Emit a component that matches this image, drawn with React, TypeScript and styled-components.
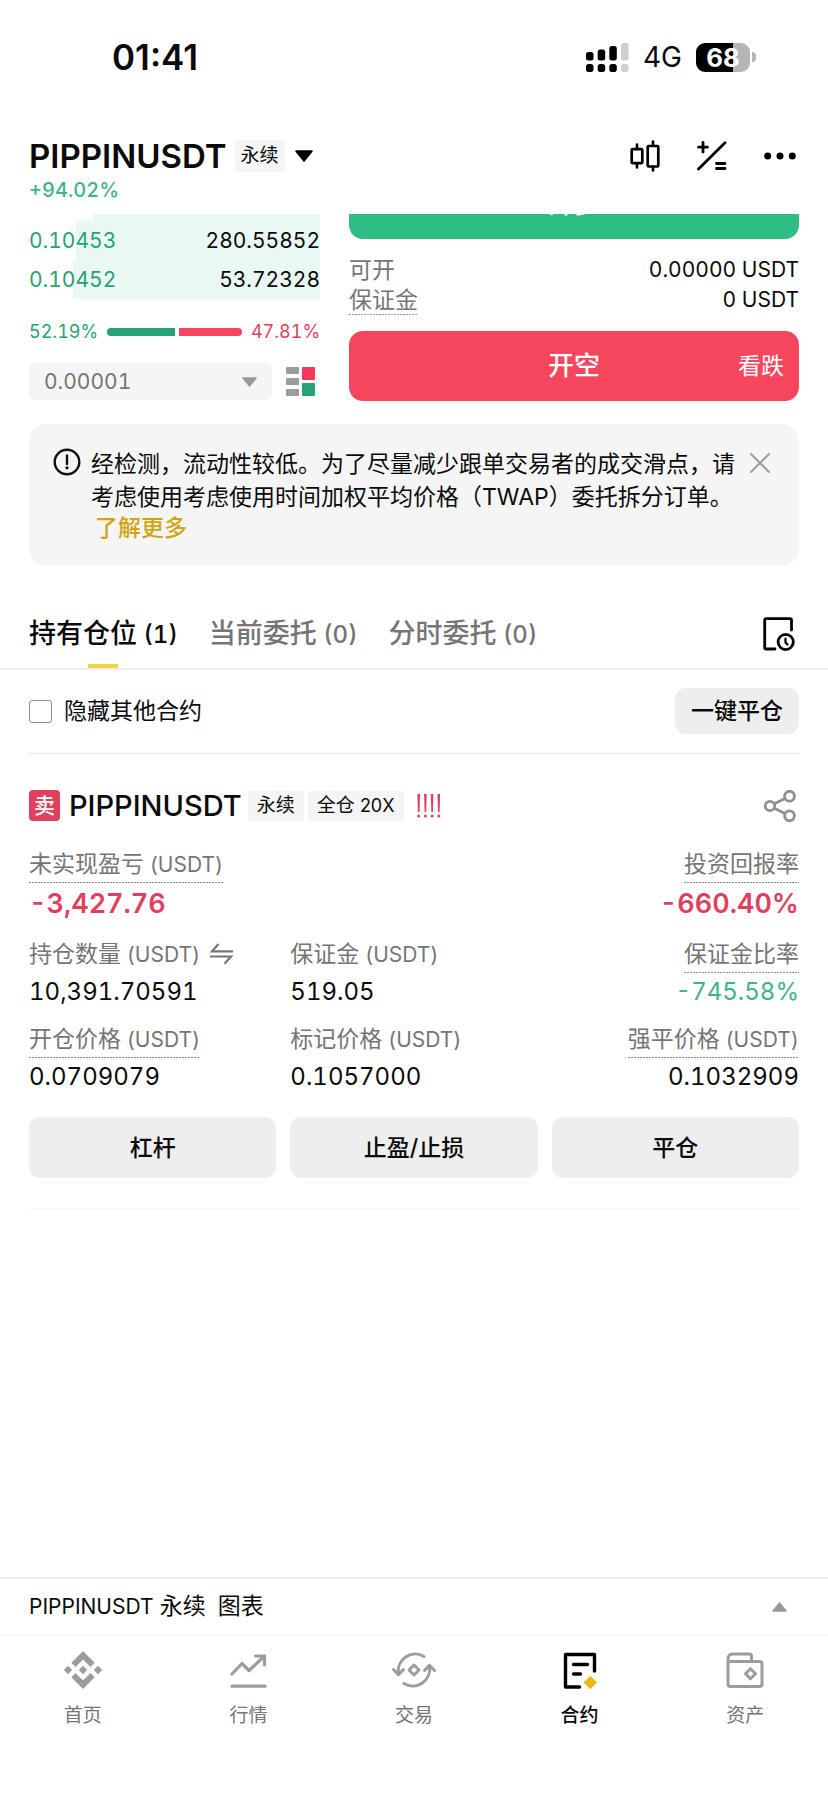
import React, { useState } from "react";
import styled, { createGlobalStyle } from "styled-components";

const c = {
  ink: "#0b0b0b",
  muted: "#757575",
  icon: "#9c9c9c",
  green: "#25a374",
  mint: "#3fb488",
  buy: "#2dbd85",
  sell: "#f6465d",
  loss: "#e0405e",
  tag: "#f5f5f5",
  fill: "#eeeeee",
  line: "#eeeeee",
  gold: "#d2a312",
};

const GlobalStyle = createGlobalStyle`
  *, *::before, *::after { box-sizing: border-box; }
  body { margin: 0; background: #fff; }
  body, button, select, input {
    font-family: Inter, "Noto Sans CJK SC", sans-serif;
    font-variant-numeric: tabular-nums;
    color: ${c.ink};
  }
  button { border: 0; padding: 0; background: none; cursor: pointer; }
  svg { display: block; flex: none; }
`;

const Page = styled.div`
  min-height: 100vh;
  display: flex;
  flex-direction: column;
`;

/* Status bar */
const StatusBar = styled.div`
  display: flex;
  align-items: center;
  justify-content: space-between;
  height: 114px;
  padding: 0 72px 0 112px;
`;
const Clock = styled.time`
  font-size: 35px;
  line-height: 40px;
  font-weight: 600;
  font-variant-numeric: normal;
`;
const StatusRight = styled.div`
  display: flex;
  align-items: center;
  gap: 14px;
`;
const Network = styled.span`
  font-size: 28px;
  line-height: 40px;
`;
const BatteryWrap = styled.div`
  display: flex;
  align-items: center;
  gap: 2px;
`;
const BatteryBody = styled.div<{ $level: number }>`
  width: 54px;
  height: 29px;
  border-radius: 9px;
  background: linear-gradient(to right, #000 ${(p) => p.$level}%, #b5b5b5 ${(p) => p.$level}%);
  color: #fff;
  font-size: 26px;
  line-height: 29px;
  font-weight: 700;
  text-align: center;
`;
const BatteryNub = styled.div`
  width: 4px;
  height: 10px;
  border-radius: 0 4px 4px 0;
  background: #b5b5b5;
`;

/* Pair header */
const PairHeader = styled.header`
  display: flex;
  justify-content: space-between;
  align-items: flex-start;
  height: 100px;
  padding: 22px 32px 0 29px;
`;
const PairRow = styled.div`
  display: flex;
  align-items: center;
  height: 40px;
`;
const PairName = styled.h1`
  margin: 0 8px 0 0;
  font-size: 33px;
  line-height: 40px;
  font-weight: 600;
`;
const PairTag = styled.span`
  padding: 0 6px;
  margin-right: 10px;
  border-radius: 3px;
  background: ${c.tag};
  font-size: 19px;
  line-height: 32px;
`;
const Change = styled.div`
  font-size: 20px;
  line-height: 28px;
  font-weight: 500;
  color: ${c.mint};
`;
const HeaderActions = styled.div`
  display: flex;
  align-items: center;
  gap: 37px;
  height: 40px;
`;
const IconButton = styled.button`
  display: flex;
  align-items: center;
  justify-content: center;
`;

/* Order area */
const Trade = styled.section`
  display: grid;
  grid-template-columns: 11fr 17fr;
  column-gap: 29px;
  padding: 0 29px;
`;
const Book = styled.div`
  display: flex;
  flex-direction: column;
`;
const BookRow = styled.div<{ $depth: number; $partial?: boolean }>`
  display: flex;
  justify-content: space-between;
  height: ${(p) => (p.$partial ? 7 : 39)}px;
  font-size: 21px;
  line-height: 39px;
  background: linear-gradient(to left, #e9f8f2 ${(p) => p.$depth}%, transparent ${(p) => p.$depth}%);
`;
const Price = styled.span`
  color: ${c.green};
`;
const Ratio = styled.div`
  display: flex;
  align-items: center;
  gap: 9px;
  margin: 18px 0 15px;
  font-size: 18px;
  line-height: 30px;
`;
const RatioText = styled.span<{ $sell?: boolean }>`
  color: ${(p) => (p.$sell ? c.loss : c.green)};
`;
const RatioBar = styled.div`
  flex: 1;
  display: flex;
  gap: 4px;
  height: 8px;
`;
const RatioPart = styled.div<{ $share: number; $sell?: boolean }>`
  flex: ${(p) => p.$share} 1 0;
  border-radius: ${(p) => (p.$sell ? "0 4px 4px 0" : "4px 0 0 4px")};
  background: ${(p) => (p.$sell ? c.sell : c.green)};
`;
const StepRow = styled.div`
  display: flex;
  align-items: center;
  gap: 14px;
  padding-right: 5px;
`;
const StepBox = styled.div`
  position: relative;
  flex: 1;
  svg {
    position: absolute;
    right: 15px;
    top: 15px;
    pointer-events: none;
  }
`;
const StepSelect = styled.select`
  appearance: none;
  display: block;
  width: 100%;
  height: 38px;
  padding: 0 15px;
  border: 0;
  border-radius: 6px;
  background: ${c.tag};
  color: ${c.muted};
  font-size: 21px;
`;
const Order = styled.div`
  display: flex;
  flex-direction: column;
`;
const ScrolledButton = styled.div`
  display: flex;
  align-items: flex-end;
  height: 25px;
  overflow: hidden;
`;
const OrderButton = styled.button<{ $side: "buy" | "sell" }>`
  display: grid;
  grid-template-columns: 1fr auto 1fr;
  align-items: center;
  flex: none;
  width: 100%;
  height: 70px;
  padding: 0 15px;
  border-radius: 14px;
  background: ${(p) => (p.$side === "buy" ? c.buy : c.sell)};
  color: #fff;
  font-size: 26px;
  line-height: 36px;
  font-weight: 500;
`;
const OrderLabel = styled.span`
  grid-column: 2;
`;
const OrderHint = styled.span`
  justify-self: end;
  font-size: 23px;
  font-weight: 400;
`;
const Info = styled.div`
  margin: 16px 0;
`;
const InfoRow = styled.div`
  display: flex;
  justify-content: space-between;
  font-size: 21px;
  line-height: 30px;
`;
const Hint = styled.span<{ $dotted?: boolean }>`
  color: ${c.muted};
  font-size: 23px;
  ${(p) =>
    p.$dotted &&
    `background: linear-gradient(to right, #9a9a9a 2px, transparent 2px) 0 100% / 3px 1px repeat-x;`}
`;

/* Notice */
const Notice = styled.aside`
  display: flex;
  align-items: flex-start;
  margin: 23px 29px 0;
  padding: 24px 28px 24px 24px;
  border-radius: 18px;
  background: ${c.tag};
`;
const NoticeIcon = styled.div`
  padding: 0 10px 0 0;
`;
const NoticeBody = styled.div`
  flex: 1;
  font-size: 23px;
  line-height: 33px;
`;
const NoticeLink = styled.a`
  display: block;
  padding-left: 4px;
  line-height: 28px;
  font-weight: 500;
  color: ${c.gold};
  text-decoration: none;
`;
const NoticeClose = styled(IconButton)`
  padding-top: 4px;
  margin-left: 12px;
`;

/* Tabs */
const Tabs = styled.nav`
  display: flex;
  align-items: stretch;
  height: 70px;
  margin-top: 34px;
  padding: 0 29px;
  border-bottom: 2px solid ${c.line};
`;
const Tab = styled.button<{ $active?: boolean }>`
  position: relative;
  margin-right: 31px;
  font-size: 27px;
  line-height: 36px;
  font-weight: 500;
  color: ${(p) => (p.$active ? c.ink : c.muted)};
  &::after {
    content: "";
    display: ${(p) => (p.$active ? "block" : "none")};
    position: absolute;
    left: 50%;
    bottom: 0;
    width: 30px;
    height: 4px;
    margin-left: -15px;
    background: #f3d33b;
  }
`;
const TabCount = styled.span`
  font-size: 24px;
`;
const TabEnd = styled(IconButton)`
  margin-left: auto;
  padding-right: 4px;
`;

/* Filter */
const Filter = styled.div`
  display: flex;
  align-items: center;
  justify-content: space-between;
  margin: 0 29px;
  padding: 18px 0 19px;
  border-bottom: 1px solid #e4e4e4;
`;
const CheckLabel = styled.label`
  display: flex;
  align-items: center;
  gap: 12px;
  font-size: 23px;
  line-height: 32px;
`;
const Check = styled.input`
  appearance: none;
  width: 23px;
  height: 23px;
  margin: 0;
  border: 1px solid #8f8f8f;
  border-radius: 3px;
  &:checked { background: ${c.ink}; }
`;
const FillButton = styled.button<{ $compact?: boolean }>`
  height: ${(p) => (p.$compact ? 46 : 61)}px;
  padding: 0 16px;
  border-radius: 11px;
  background: ${c.fill};
  font-size: 23px;
  line-height: 32px;
  font-weight: 500;
`;

/* Position */
const Position = styled.article`
  margin: 0 29px;
  padding: 36px 0 30px;
  border-bottom: 2px solid #f7f7f7;
`;
const PositionHead = styled.div`
  display: flex;
  align-items: center;
  height: 31px;
`;
const SideBadge = styled.span`
  width: 31px;
  margin-right: 9px;
  border-radius: 4px;
  background: ${c.loss};
  color: #fff;
  font-size: 21px;
  line-height: 31px;
  font-weight: 500;
  text-align: center;
`;
const Symbol = styled.h2`
  margin: 0 6px 0 0;
  font-size: 29px;
  line-height: 31px;
  font-weight: 500;
`;
const PosTag = styled.span`
  margin-right: 4px;
  padding: 0 9px;
  border-radius: 3px;
  background: ${c.tag};
  font-size: 19px;
  line-height: 30px;
`;
const Multiple = styled.span`
  font-size: 18px;
  font-variant-numeric: normal;
`;
const Risk = styled.span`
  margin-left: 9px;
`;
const Share = styled(IconButton)`
  margin-left: auto;
  padding-right: 3px;
`;
const Metrics = styled.div`
  display: grid;
  grid-template-columns: repeat(3, 1fr);
  gap: 13px 14px;
  margin-top: 27px;
`;
const Metric = styled.div<{ $end?: boolean; $wide?: boolean }>`
  display: flex;
  flex-direction: column;
  align-items: ${(p) => (p.$end ? "flex-end" : "flex-start")};
  grid-column: ${(p) => (p.$wide ? "span 2" : "auto")};
  white-space: nowrap;
`;
const MetricLabel = styled.div<{ $dotted?: boolean }>`
  display: flex;
  align-items: center;
  gap: 9px;
  height: 35px;
  padding-bottom: 3px;
  font-size: 23px;
  line-height: 32px;
  color: ${c.muted};
  ${(p) =>
    p.$dotted &&
    `background: linear-gradient(to right, #8a8a8a 2px, transparent 2px) 0 100% / 3px 1px repeat-x;`}
`;
const Unit = styled.span`
  font-size: 21px;
`;
const MetricValue = styled.div<{ $big?: boolean; $color?: string }>`
  font-size: ${(p) => (p.$big ? 27 : 24)}px;
  line-height: ${(p) => (p.$big ? 42 : 37)}px;
  font-weight: ${(p) => (p.$big ? 600 : 400)};
  color: ${(p) => p.$color ?? c.ink};
`;
const Actions = styled.div`
  display: grid;
  grid-template-columns: repeat(3, 1fr);
  gap: 14px;
  margin-top: 22px;
`;

/* Bottom */
const Bottom = styled.footer`
  margin-top: auto;
`;
const ChartBar = styled.button`
  display: flex;
  align-items: center;
  justify-content: space-between;
  width: 100%;
  height: 57px;
  padding: 0 41px 0 29px;
  border-top: 2px solid ${c.line};
  font-size: 23px;
  line-height: 32px;
`;
const ChartTitle = styled.span`
  display: flex;
  gap: 12px;
`;
const Latin = styled.span`
  font-size: 21px;
`;
const NavBar = styled.nav`
  display: grid;
  grid-template-columns: repeat(5, 1fr);
  padding: 14px 0 65px;
  border-top: 2px solid #f6f6f6;
`;
const NavItem = styled.a<{ $active?: boolean }>`
  display: flex;
  flex-direction: column;
  align-items: center;
  gap: 12px;
  font-size: 19px;
  line-height: 28px;
  font-weight: ${(p) => (p.$active ? 500 : 400)};
  color: ${(p) => (p.$active ? c.ink : c.muted)};
  text-decoration: none;
`;

const Triangle = ({ w, h, color, up }: { w: number; h: number; color: string; up?: boolean }) => (
  <svg width={w} height={h} viewBox="0 0 16 10" preserveAspectRatio="none" aria-hidden="true">
    <path
      d={up ? "M8 1 15 9H1Z" : "M8 9 15 1H1Z"}
      fill={color}
      stroke={color}
      strokeWidth="1.5"
      strokeLinejoin="round"
    />
  </svg>
);

const Signal = () => (
  <svg width="43" height="29" viewBox="0 0 43 29" aria-label="信号">
    <g fill="#000">
      <rect x="0" y="9" width="7.5" height="8.5" rx="2.5" />
      <rect x="11.7" y="6.5" width="7.5" height="11" rx="2.5" />
      <rect x="23.3" y="3" width="7.5" height="14.5" rx="2.5" />
      <rect x="0" y="21" width="7.5" height="8" rx="2.8" />
      <rect x="11.7" y="21" width="7.5" height="8" rx="2.8" />
      <rect x="23.3" y="21" width="7.5" height="8" rx="2.8" />
    </g>
    <g fill="#cfcfcf">
      <rect x="35" y="0" width="7.5" height="17.5" rx="2.5" />
      <rect x="35" y="21" width="7.5" height="8" rx="2.8" />
    </g>
  </svg>
);

const CandlesIcon = () => (
  <svg width="30" height="32" viewBox="0 0 30 32" fill="none" stroke="#000" strokeWidth="2.7" strokeLinecap="round">
    <rect x="1.7" y="9.2" width="10.6" height="14" rx="1" />
    <path d="M7 4.5V9M7 23.5V27.5" />
    <rect x="17.7" y="6" width="10.6" height="20.5" rx="1" />
    <path d="M23 1.5V5.5M23 27V30.5" />
  </svg>
);

const CalcIcon = () => (
  <svg width="30" height="30" viewBox="0 0 30 30" fill="none" stroke="#000" strokeWidth="2.8" strokeLinecap="round">
    <path d="M1.5 28 28 1.8" />
    <path d="M1.5 6.2H10.5M6 1.5V11" />
    <path d="M19.5 22.5H28M19.5 27.5H28" />
  </svg>
);

const MoreIcon = () => (
  <svg width="32" height="8" viewBox="0 0 32 8" fill="#000">
    <circle cx="3.7" cy="4" r="3.5" />
    <circle cx="16" cy="4" r="3.5" />
    <circle cx="28.3" cy="4" r="3.5" />
  </svg>
);

const BookIcon = () => (
  <svg width="29" height="29" viewBox="0 0 29 29">
    <g fill={c.icon}>
      <rect x="0" y="0" width="13" height="7" rx="1" />
      <rect x="0" y="11" width="13" height="7" rx="1" />
      <rect x="0" y="22" width="13" height="7" rx="1" />
    </g>
    <rect x="16" y="0" width="13" height="13" rx="1" fill="#f6385a" />
    <rect x="16" y="16" width="13" height="13" rx="1" fill={c.green} />
  </svg>
);

const AlertIcon = () => (
  <svg width="28" height="28" viewBox="0 0 28 28" fill="none" stroke="#111" strokeWidth="2.4">
    <circle cx="14" cy="14" r="12.3" />
    <path d="M14 7.5V16" strokeLinecap="round" />
    <circle cx="14" cy="19.8" r="1.6" fill="#111" stroke="none" />
  </svg>
);

const CloseIcon = () => (
  <svg width="22" height="22" viewBox="0 0 22 22" stroke={c.icon} strokeWidth="2" strokeLinecap="round">
    <path d="M2 2 20 20M20 2 2 20" />
  </svg>
);

const HistoryIcon = () => (
  <svg width="32" height="34" viewBox="0 0 32 34" fill="none" stroke="#000" strokeWidth="2.8" strokeLinecap="round">
    <path d="M28.5 13V3.2A1.5 1.5 0 0 0 27 1.7H3.2A1.5 1.5 0 0 0 1.7 3.2V30.5A1.5 1.5 0 0 0 3.2 32H12" />
    <circle cx="22.7" cy="25" r="7.6" />
    <path d="M22.5 21.5V25.5L24.5 27.5" strokeWidth="2.2" />
  </svg>
);

const RiskIcon = () => (
  <svg width="25" height="24" viewBox="0 0 25 24" aria-label="自动减仓风险">
    {[1.7, 8.4, 15.1, 21.8].map((x) => (
      <g key={x} fill={c.loss}>
        <path d={`M${x - 1.3} 0H${x + 1.3}L${x + 0.8} 18H${x - 0.8}Z`} />
        <circle cx={x} cy="22" r="1.5" />
      </g>
    ))}
  </svg>
);

const ShareIcon = () => (
  <svg width="32" height="32" viewBox="0 0 32 32" fill="none" stroke="#909090" strokeWidth="2.8">
    <circle cx="6" cy="16" r="4.7" />
    <circle cx="25.5" cy="6.2" r="4.9" />
    <circle cx="25.5" cy="25.8" r="4.9" />
    <path d="M10.3 13.8 21 8.4M10.3 18.2 21 23.6" />
  </svg>
);

const SwapIcon = () => (
  <svg width="25" height="22" viewBox="0 0 25 22" fill="none" stroke={c.muted} strokeWidth="2.2">
    <path d="M24 8.3H3L9.5 1" />
    <path d="M1 13.5H22L15.5 20.8" />
  </svg>
);

const HomeIcon = () => (
  <svg width="40" height="40" viewBox="0 0 40 40" fill={c.icon}>
    <path d="M20 1 31.7 12.7 27.5 16.9 20 9.4 12.5 16.9 8.3 12.7Z" />
    <path d="M20 39 31.7 27.3 27.5 23.1 20 30.6 12.5 23.1 8.3 27.3Z" />
    <path d="M20 15.8 24.2 20 20 24.2 15.8 20Z" />
    <path d="M5 15.8 9.2 20 5 24.2 0.8 20Z" />
    <path d="M35 15.8 39.2 20 35 24.2 30.8 20Z" />
  </svg>
);

const TrendIcon = () => (
  <svg width="40" height="40" viewBox="0 0 40 40" fill="none" stroke={c.icon} strokeWidth="3.2" strokeLinecap="round" strokeLinejoin="round">
    <path d="M4 24 14 13.5 21 20.5 36 6.5" />
    <path d="M27.5 6H36.5V15" strokeLinejoin="miter" />
    <path d="M4 36.2H37" />
  </svg>
);

const ExchangeIcon = () => (
  <svg width="46" height="40" viewBox="0 0 46 40" fill="none" stroke={c.icon} strokeWidth="3" strokeLinecap="round" strokeLinejoin="round">
    <path d="M33 6.5A17 17 0 0 0 7.5 24" />
    <path d="M2.5 19.5 7.5 24.7 12.5 19.5" />
    <path d="M13 33.5A17 17 0 0 0 38.5 16" />
    <path d="M33.5 20.5 38.5 15.3 43.5 20.5" />
    <path d="M23 15 28 20 23 25 18 20Z" />
  </svg>
);

const ContractIcon = () => (
  <svg width="40" height="40" viewBox="0 0 40 40" fill="none" stroke="#000" strokeWidth="3.4" strokeLinecap="round" strokeLinejoin="round">
    <path d="M34.5 21V4.5H5.5V37H19.5" />
    <path d="M13.5 14.5H27.5M13.5 24H20.5" />
    <path d="M30.3 25.8 37 32.5 30.3 39.2 23.6 32.5Z" fill="#e9b90f" stroke="none" />
  </svg>
);

const WalletIcon = () => (
  <svg width="40" height="40" viewBox="0 0 40 40" fill="none" stroke={c.icon} strokeWidth="3" strokeLinejoin="round">
    <path d="M26.5 11.5V5.5A1.5 1.5 0 0 0 25 4H7.5A4.5 4.5 0 0 0 3 8.5V34A2.5 2.5 0 0 0 5.5 36.5H34.5A2.5 2.5 0 0 0 37 34V14A2.5 2.5 0 0 0 34.5 11.5H3" />
    <path d="M25.5 18.8 30.5 23.8 25.5 28.8 20.5 23.8Z" />
  </svg>
);

const navItems = [
  { label: "首页", icon: <HomeIcon /> },
  { label: "行情", icon: <TrendIcon /> },
  { label: "交易", icon: <ExchangeIcon /> },
  { label: "合约", icon: <ContractIcon />, active: true },
  { label: "资产", icon: <WalletIcon /> },
];

const tabs = [
  { label: "持有仓位", count: 1, active: true },
  { label: "当前委托", count: 0 },
  { label: "分时委托", count: 0 },
];

const bids = [
  { price: "0.10453", amount: "280.55852", depth: 84 },
  { price: "0.10452", amount: "53.72328", depth: 85 },
];

type MetricData = {
  label: string;
  unit?: string;
  value: string;
  dotted?: boolean;
  end?: boolean;
  wide?: boolean;
  big?: boolean;
  swap?: boolean;
  color?: string;
};

const metrics: MetricData[] = [
  { label: "未实现盈亏", unit: "(USDT)", value: "-3,427.76", dotted: true, wide: true, big: true, color: c.loss },
  { label: "投资回报率", value: "-660.40%", dotted: true, end: true, big: true, color: c.loss },
  { label: "持仓数量", unit: "(USDT)", value: "10,391.70591", swap: true },
  { label: "保证金", unit: "(USDT)", value: "519.05" },
  { label: "保证金比率", value: "-745.58%", dotted: true, end: true, color: c.mint },
  { label: "开仓价格", unit: "(USDT)", value: "0.0709079", dotted: true },
  { label: "标记价格", unit: "(USDT)", value: "0.1057000" },
  { label: "强平价格", unit: "(USDT)", value: "0.1032909", dotted: true, end: true },
];

export default function App() {
  const [hideOthers, setHideOthers] = useState(false);

  return (
    <Page>
      <GlobalStyle />
      <StatusBar>
        <Clock>01:41</Clock>
        <StatusRight>
          <Signal />
          <Network>4G</Network>
          <BatteryWrap>
            <BatteryBody $level={68}>68</BatteryBody>
            <BatteryNub />
          </BatteryWrap>
        </StatusRight>
      </StatusBar>

      <PairHeader>
        <div>
          <PairRow>
            <PairName>PIPPINUSDT</PairName>
            <PairTag>永续</PairTag>
            <IconButton aria-label="切换合约">
              <Triangle w={18} h={12} color="#000" />
            </IconButton>
          </PairRow>
          <Change>+94.02%</Change>
        </div>
        <HeaderActions>
          <IconButton aria-label="K线"><CandlesIcon /></IconButton>
          <IconButton aria-label="计算器"><CalcIcon /></IconButton>
          <IconButton aria-label="更多"><MoreIcon /></IconButton>
        </HeaderActions>
      </PairHeader>

      <Trade>
        <Book>
          <BookRow $depth={78} $partial />
          {bids.map((b) => (
            <BookRow key={b.price} $depth={b.depth}>
              <Price>{b.price}</Price>
              <span>{b.amount}</span>
            </BookRow>
          ))}
          <Ratio>
            <RatioText>52.19%</RatioText>
            <RatioBar>
              <RatioPart $share={52.19} />
              <RatioPart $share={47.81} $sell />
            </RatioBar>
            <RatioText $sell>47.81%</RatioText>
          </Ratio>
          <StepRow>
            <StepBox>
              <StepSelect aria-label="价格精度" defaultValue="0.00001">
                <option>0.00001</option>
              </StepSelect>
              <Triangle w={15} h={10} color="#9a9a9a" />
            </StepBox>
            <IconButton aria-label="盘口样式"><BookIcon /></IconButton>
          </StepRow>
        </Book>

        <Order>
          <ScrolledButton>
            <OrderButton $side="buy">
              <OrderLabel>开多</OrderLabel>
            </OrderButton>
          </ScrolledButton>
          <Info>
            <InfoRow>
              <Hint>可开</Hint>
              <span>0.00000 USDT</span>
            </InfoRow>
            <InfoRow>
              <Hint $dotted>保证金</Hint>
              <span>0 USDT</span>
            </InfoRow>
          </Info>
          <OrderButton $side="sell">
            <OrderLabel>开空</OrderLabel>
            <OrderHint>看跌</OrderHint>
          </OrderButton>
        </Order>
      </Trade>

      <Notice>
        <NoticeIcon><AlertIcon /></NoticeIcon>
        <NoticeBody>
          经检测，流动性较低。为了尽量减少跟单交易者的成交滑点，请考虑使用考虑使用时间加权平均价格（TWAP）委托拆分订单。
          <NoticeLink href="#more">了解更多</NoticeLink>
        </NoticeBody>
        <NoticeClose aria-label="关闭"><CloseIcon /></NoticeClose>
      </Notice>

      <Tabs>
        {tabs.map((t) => (
          <Tab key={t.label} $active={t.active}>
            {t.label}
            <TabCount> ({t.count})</TabCount>
          </Tab>
        ))}
        <TabEnd aria-label="历史记录"><HistoryIcon /></TabEnd>
      </Tabs>

      <Filter>
        <CheckLabel>
          <Check type="checkbox" checked={hideOthers} onChange={(e) => setHideOthers(e.target.checked)} />
          隐藏其他合约
        </CheckLabel>
        <FillButton $compact>一键平仓</FillButton>
      </Filter>

      <Position>
        <PositionHead>
          <SideBadge>卖</SideBadge>
          <Symbol>PIPPINUSDT</Symbol>
          <PosTag>永续</PosTag>
          <PosTag>全仓 <Multiple>20X</Multiple></PosTag>
          <Risk><RiskIcon /></Risk>
          <Share aria-label="分享"><ShareIcon /></Share>
        </PositionHead>
        <Metrics>
          {metrics.map((m) => (
            <Metric key={m.label} $end={m.end} $wide={m.wide}>
              <MetricLabel $dotted={m.dotted}>
                <span>
                  {m.label}
                  {m.unit && <Unit> {m.unit}</Unit>}
                </span>
                {m.swap && <SwapIcon />}
              </MetricLabel>
              <MetricValue $big={m.big} $color={m.color}>{m.value}</MetricValue>
            </Metric>
          ))}
        </Metrics>
        <Actions>
          <FillButton>杠杆</FillButton>
          <FillButton>止盈/止损</FillButton>
          <FillButton>平仓</FillButton>
        </Actions>
      </Position>

      <Bottom>
        <ChartBar>
          <ChartTitle>
            <span><Latin>PIPPINUSDT</Latin> 永续</span>
            <span>图表</span>
          </ChartTitle>
          <Triangle w={15} h={10} color="#9a9a9a" up />
        </ChartBar>
        <NavBar>
          {navItems.map((n) => (
            <NavItem key={n.label} href="#" $active={n.active}>
              {n.icon}
              {n.label}
            </NavItem>
          ))}
        </NavBar>
      </Bottom>
    </Page>
  );
}
